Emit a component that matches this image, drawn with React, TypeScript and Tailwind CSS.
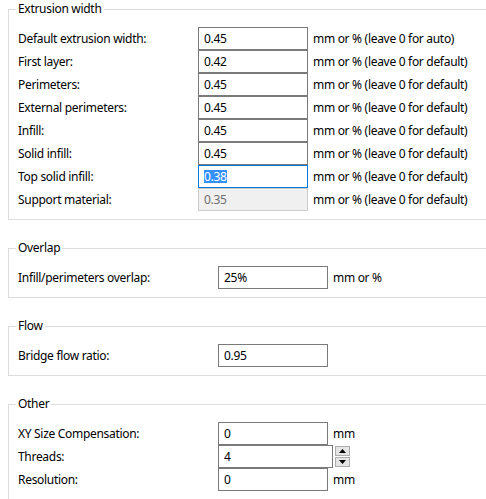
// Print settings panel: extrusion width, overlap, flow, other
type Row = {
  label: string
  value: string
  suffix?: string
  state?: 'focus' | 'disabled'
}

const extrusion: Row[] = [
  { label: 'Default extrusion width:', value: '0.45', suffix: 'mm or % (leave 0 for auto)' },
  { label: 'First layer:', value: '0.42', suffix: 'mm or % (leave 0 for default)' },
  { label: 'Perimeters:', value: '0.45', suffix: 'mm or % (leave 0 for default)' },
  { label: 'External perimeters:', value: '0.45', suffix: 'mm or % (leave 0 for default)' },
  { label: 'Infill:', value: '0.45', suffix: 'mm or % (leave 0 for default)' },
  { label: 'Solid infill:', value: '0.45', suffix: 'mm or % (leave 0 for default)' },
  { label: 'Top solid infill:', value: '0.38', suffix: 'mm or % (leave 0 for default)', state: 'focus' },
  { label: 'Support material:', value: '0.35', suffix: 'mm or % (leave 0 for default)', state: 'disabled' },
]

const TextBox = ({ row, width }: { row: Row; width: string }) => {
  if (row.state === 'focus') {
    return (
      <div className={`${width} flex h-[23px] items-center border border-[#0078d7] bg-white pl-[5px]`}>
        <span className="bg-[#3390ff] leading-[13px] text-white">{row.value}</span>
      </div>
    )
  }
  if (row.state === 'disabled') {
    return (
      <div className={`${width} flex h-[23px] items-center border border-[#cccccc] bg-[#f0f0f0] pl-[5px] text-[#6d6d6d]`}>
        {row.value}
      </div>
    )
  }
  return (
    <div className={`${width} flex h-[23px] items-center border border-[#7a7a7a] bg-white pl-[5px]`}>
      {row.value}
    </div>
  )
}

const Group = ({ title, children }: { title: string; children: React.ReactNode }) => (
  <fieldset className="border border-[#dcdcdc] pb-[8px]">
    <legend className="ml-[7px] px-[2px] leading-[16px]">{title}</legend>
    <div className="mt-[10px] flex flex-col pl-[9px]">{children}</div>
  </fieldset>
)

const Spinner = () => (
  <div className="ml-[2px] flex flex-col gap-px">
    <div className="flex h-[10px] w-[15px] items-center justify-center border border-[#adadad] bg-[#e5e5e5]">
      <svg width="7" height="4" viewBox="0 0 7 4">
        <path d="M0 4 L3.5 0 L7 4 Z" fill="#000" />
      </svg>
    </div>
    <div className="flex h-[10px] w-[15px] items-center justify-center border border-[#adadad] bg-[#e5e5e5]">
      <svg width="7" height="4" viewBox="0 0 7 4">
        <path d="M0 0 L7 0 L3.5 4 Z" fill="#000" />
      </svg>
    </div>
  </div>
)

export default function App() {
  return (
    <div className="h-[499px] w-[486px] overflow-hidden bg-white font-['Noto_Sans',sans-serif] text-[12px] tracking-[-0.3px] text-black">
      <div className="flex w-[540px] flex-col gap-[20px] pl-[8px] pt-[1px]">
        {/* Extrusion width */}
        <Group title="Extrusion width">
          {extrusion.map((row) => (
            <div key={row.label} className="flex h-[23px] items-center">
              <div className="w-[180px]">{row.label}</div>
              <TextBox row={row} width="w-[110px]" />
              <div className="ml-[5px]">{row.suffix}</div>
            </div>
          ))}
        </Group>

        {/* Overlap */}
        <Group title="Overlap">
          <div className="flex h-[23px] items-center">
            <div className="w-[200px]">Infill/perimeters overlap:</div>
            <TextBox row={{ label: '', value: '25%' }} width="w-[110px]" />
            <div className="ml-[5px]">mm or %</div>
          </div>
        </Group>

        {/* Flow */}
        <Group title="Flow">
          <div className="flex h-[23px] items-center">
            <div className="w-[200px]">Bridge flow ratio:</div>
            <TextBox row={{ label: '', value: '0.95' }} width="w-[110px]" />
          </div>
        </Group>

        {/* Other */}
        <Group title="Other">
          <div className="flex h-[23px] items-center">
            <div className="w-[200px]">XY Size Compensation:</div>
            <TextBox row={{ label: '', value: '0' }} width="w-[110px]" />
            <div className="ml-[5px]">mm</div>
          </div>
          <div className="flex h-[23px] items-center">
            <div className="w-[200px]">Threads:</div>
            <TextBox row={{ label: '', value: '4' }} width="w-[115px]" />
            <Spinner />
          </div>
          <div className="flex h-[23px] items-center">
            <div className="w-[200px]">Resolution:</div>
            <TextBox row={{ label: '', value: '0' }} width="w-[110px]" />
            <div className="ml-[5px]">mm</div>
          </div>
        </Group>
      </div>
    </div>
  )
}
